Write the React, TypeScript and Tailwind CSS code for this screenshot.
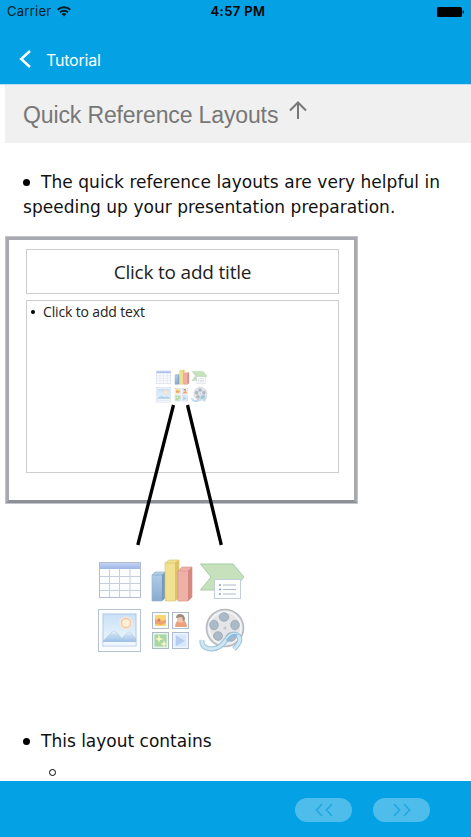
import React from 'react';

const ContentIcons: React.FC<{ className: string }> = ({ className }) => (
  <svg viewBox="0 0 150 100" className={className} fill="none">
    <defs>
      <linearGradient id="sky" x1="0" y1="0" x2="0" y2="1">
        <stop offset="0" stopColor="#c9e0f7" />
        <stop offset="1" stopColor="#f1f9fe" />
      </linearGradient>
      <linearGradient id="hill" x1="0" y1="0" x2="0" y2="1">
        <stop offset="0" stopColor="#f4f9fd" />
        <stop offset=".35" stopColor="#c5dcf1" />
        <stop offset="1" stopColor="#9dc0e6" />
      </linearGradient>
      <linearGradient id="blueBar" x1="0" y1="0" x2="0" y2="1">
        <stop offset="0" stopColor="#b4cfea" />
        <stop offset="1" stopColor="#86abd0" />
      </linearGradient>
      <linearGradient id="tableHead" x1="0" y1="0" x2="0" y2="1">
        <stop offset="0" stopColor="#c3d3f3" />
        <stop offset="1" stopColor="#9db5e6" />
      </linearGradient>
    </defs>

    {/* table */}
    <rect x="3.500" y="5.500" width="41" height="35" fill="#fcfdff" stroke="#b3bdcf" />
    <rect x="4" y="6" width="40" height="6" fill="url(#tableHead)" />
    <path d="M4 19.500h40M4 26.500h40M4 33.500h40M13.500 12v28M23.500 12v28M34 12v28" stroke="#c6cfde" />

    {/* chart */}
    <path d="M56 18l3-3h10v26l-3 3H56z" fill="url(#blueBar)" stroke="#9bb6cf" strokeWidth=".7" />
    <path d="M66 18l3-3v26l-3 3z" fill="#7399bf" />
    <path d="M56 18h10l3-3" stroke="#88a9c9" strokeWidth=".7" />
    <path d="M69 6l4-3h10v38l-4 3H69z" fill="#f0e08f" stroke="#d9c67a" strokeWidth=".7" />
    <path d="M79 6l4-3v38l-4 3z" fill="#dcc366" />
    <path d="M69 6h10l4-3" stroke="#d9c67a" strokeWidth=".7" />
    <path d="M82 14l4-4h10v30l-4 4H82z" fill="#efb0a8" stroke="#d5988f" strokeWidth=".7" />
    <path d="M92 14l4-4v30l-4 4z" fill="#d58780" />
    <path d="M82 14h10l4-4" stroke="#d5988f" strokeWidth=".7" />

    {/* diagram */}
    <path d="M104.500 7H137l11 13-11 13h-32.500l10.500-13z" fill="#c5e2bd" stroke="#a8cda6" />
    <rect x="118.500" y="22.500" width="26" height="19" fill="#fdfefe" stroke="#c3cedb" />
    <path d="M123 28h2M123 32.500h2M123 37h2" stroke="#8a9db8" strokeWidth="1.500" />
    <path d="M127 28h13M127 32.500h13M127 37h13" stroke="#b0b9c7" strokeWidth="1.200" />

    {/* picture */}
    <rect x="2.500" y="52.500" width="42" height="42" fill="#fafcfe" stroke="#b5c4d0" />
    <rect x="7" y="57" width="33" height="32" fill="url(#sky)" stroke="#b1c8e2" />
    <circle cx="30" cy="66" r="7" fill="#fce8d6" opacity=".6" />
    <circle cx="30" cy="66" r="4.500" fill="#fff0d5" stroke="#f5c8a3" strokeWidth="1.300" />
    <path d="M22 85l9-9q2-2 4 0l5 6v3z" fill="url(#hill)" stroke="#a8c3df" strokeWidth=".5" />
    <path d="M7 84l9-9q2-2 4 0l9 10H7z" fill="url(#hill)" stroke="#a8c3df" strokeWidth=".5" />
    <path d="M7.500 85h32v3.500h-32z" fill="#edf7fd" />

    {/* clip art */}
    <rect x="56.500" y="55.500" width="16" height="16" fill="#f8fafb" stroke="#aebcc5" />
    <rect x="59" y="58" width="11" height="11" fill="#f6d772" />
    <path d="M59 62l5 2 6-1v3l-5 2-6-1z" fill="#eda474" />
    <circle cx="63" cy="63" r="1.500" fill="#dd7669" />
    <rect x="76.500" y="55.500" width="16" height="16" fill="#fbfcfd" stroke="#aebccb" />
    <path d="M79 70q1-8 6-8t6 8z" fill="#eba17e" />
    <circle cx="84.500" cy="62" r="3.500" fill="#f2c9a8" />
    <path d="M80 61q0-4 4-4 5 0 5 6l-2 1-1-4z" fill="#a18b80" />
    <rect x="56.500" y="75.500" width="16" height="16" fill="#e9f3ec" stroke="#a8bec1" />
    <rect x="58.500" y="77.500" width="12" height="12" fill="#a8d6a4" />
    <path d="M63 77l1 4 4 1-4 1-1 3-1-3-3-1 3-1zM68 83l1 3 2 1-2 1-1 2-1-2-3-1 3-1z" fill="#f5f8be" />
    <rect x="76.500" y="75.500" width="16" height="16" fill="#eef4fd" stroke="#aebbd3" />
    <rect x="78.500" y="77.500" width="12" height="12" fill="#d9e7fb" />
    <path d="M80 78.500l9 5.500-9 5z" fill="#b3cdf3" />

    {/* media reel */}
    <circle cx="129" cy="71" r="18.500" fill="#e3e5e8" stroke="#b7babf" strokeWidth="1.600" />
    <circle cx="129" cy="71" r="16" stroke="#f5f6f7" strokeWidth="1.500" />
    <g fill="#acb9c6" stroke="#9ba7b3" strokeWidth=".8">
      <ellipse cx="128" cy="60" rx="4.800" ry="4.300" />
      <ellipse cx="139" cy="68" rx="4.300" ry="4.800" />
      <ellipse cx="135" cy="80" rx="4.800" ry="4.300" />
      <ellipse cx="122" cy="79" rx="4.500" ry="4.300" />
      <ellipse cx="118" cy="68" rx="4.300" ry="4.800" />
    </g>
    <circle cx="129" cy="71" r="1.500" fill="#c2c6c9" />
    <path d="M106 83q-1 8 9 9 9 0 15-9 6-8 11-5 7 4-3 14" stroke="#9dc3da" strokeWidth="5" />
    <path d="M106 83q-1 8 9 9 9 0 15-9 6-8 11-5 7 4-3 14" stroke="#d0e7f3" strokeWidth="3" />
    <path d="M131 84q6-8 10-5" stroke="#8fbbdc" strokeWidth="3" />
  </svg>
);

const StatusBar: React.FC = () => (
  <div className="grid h-6 grid-cols-3 items-center pl-[7px] pr-[7px] text-[13px] text-[#041e2a]">
    <div className="flex items-center gap-[6px]">
      <span className="tracking-[0.25px]">Carrier</span>
      <svg viewBox="0 0 14 11" className="-mt-px h-[11px] w-[14px]" fill="none" stroke="#031821" strokeWidth="1.900">
        <path d="M.7 3.800a9 9 0 0 1 12.600 0M3 6.400a5.700 5.700 0 0 1 8 0" />
        <path d="M4.700 8a3.300 3.300 0 0 1 4.600 0L7 10.500z" fill="#031821" stroke="none" />
      </svg>
    </div>
    <span className="pl-[5px] text-center font-semibold tracking-[0.4px] text-black">4:57 PM</span>
    <svg viewBox="0 0 28 12" className="h-3 w-7 justify-self-end">
      <rect x="1" y="1" width="25" height="10" rx="1.500" fill="#000" />
      <path d="M26.700 4.200q1.300.3 1.300 1.800t-1.300 1.800z" fill="#000" />
    </svg>
  </div>
);

const SlidePreview: React.FC = () => (
  <div className="relative h-[420px]">
    <div className="flex h-[268px] w-[353px] flex-col border-4 border-[#a8aab0] border-b-[#8d9096] bg-white pl-[17px] pr-[15px] pt-[9px] outline-1 -outline-offset-1 outline-[#c2c4ca]">
      <div className="flex h-[45px] items-center justify-center border border-[#cdcdcd] pt-[2px] font-['Open_Sans',sans-serif] text-[19px] tracking-[-0.2px] text-[#222]">
        Click to add title
      </div>
      <div className="mt-[6px] flex h-[173px] flex-col items-center border border-[#cdcdcd]">
        <div className="flex w-full items-center gap-[8px] pl-[4px] font-['Open_Sans',sans-serif] text-[14px] leading-[21px] tracking-[-0.15px] text-[#222]">
          <span className="h-1 w-1 rounded-full bg-black" />
          <span>Click to add text</span>
        </div>
        <ContentIcons className="mr-[2px] mt-[47px] h-[35px] w-[53px]" />
      </div>
    </div>
    {/* callout from the placeholder to the enlarged icons */}
    <svg viewBox="0 0 353 420" className="absolute left-0 top-0 h-[420px] w-[353px]">
      <path d="M168.500 169L132.800 309M182.500 169L216.300 309" stroke="#000" strokeWidth="3.300" />
    </svg>
    <ContentIcons className="ml-[91px] mt-[53px] h-[100px] w-[150px]" />
  </div>
);

export default function App() {
  return (
    <div className="flex h-[837px] w-[471px] flex-col overflow-hidden bg-white font-['Inter',sans-serif]">
      <header className="h-[84px] shrink-0 bg-[#04a1e4]">
        <StatusBar />
        <div className="flex h-[60px] items-center pl-[19px] pt-[11px] text-white">
          <svg viewBox="0 0 12 18" className="-mt-[2px] h-[18px] w-3" fill="none" stroke="currentColor" strokeWidth="2.500">
            <path d="M11 1L2.200 9 11 17" />
          </svg>
          <span className="ml-[15px] text-[16px] tracking-[-0.2px]">Tutorial</span>
        </div>
      </header>

      <main className="min-h-0 flex-1 overflow-hidden border-t border-[#b9e1f3] pl-[5px] font-['Verdana','DejaVu_Sans',sans-serif] text-[17px] leading-[25px] text-[#111]">
        <h1 className="flex h-[58px] items-center bg-[#f0f0f0] pl-[18px] font-['Liberation_Sans',sans-serif] text-[23px] font-normal text-[#777]">
          <span className="pt-[2px] tracking-[-0.13px]">Quick Reference Layouts</span>
          <svg viewBox="0 0 18 19" className="-mt-[8px] ml-[11px] h-[19px] w-[18px]" fill="none" stroke="currentColor" strokeWidth="2">
            <path d="M9 18V2M1 9.500L9 1.500l8 8" />
          </svg>
        </h1>

        <div className="whitespace-nowrap pl-[18px] pt-[27px]">
          <div className="flex items-center">
            <span className="mr-[11px] h-[7px] w-[7px] rounded-full bg-black" />
            <span className="tracking-[0.05px]">The quick reference layouts are very helpful in</span>
          </div>
          <p className="tracking-[0.03px]">speeding up your presentation preparation.</p>
        </div>

        <div className="mt-[16px]">
          <SlidePreview />
        </div>

        <div className="mt-[73px] flex items-center pl-[18px]">
          <span className="mr-[11px] h-[7px] w-[7px] rounded-full bg-black" />
          <span>This layout contains</span>
        </div>
        <span className="ml-[44px] mt-[15px] block h-[7px] w-[7px] rounded-full border border-black" />
      </main>

      <footer className="flex h-14 shrink-0 items-center justify-end gap-[21px] bg-[#04a1e4] pr-[41px] pt-[2px]">
        <button className="flex h-6 w-[57px] items-center justify-center rounded-full bg-[#4fbdeb]">
          <svg viewBox="0 0 18 14" className="h-[14px] w-[18px]" fill="none" stroke="#23a9df" strokeWidth="1.800">
            <path d="M7 1L1.500 7 7 13M17 1l-5.500 6L17 13" />
          </svg>
        </button>
        <button className="flex h-6 w-[57px] items-center justify-center rounded-full bg-[#4fbdeb]">
          <svg viewBox="0 0 18 14" className="h-[14px] w-[18px]" fill="none" stroke="#23a9df" strokeWidth="1.800">
            <path d="M1 1l5.500 6L1 13M11 1l5.500 6L11 13" />
          </svg>
        </button>
      </footer>
    </div>
  );
}
